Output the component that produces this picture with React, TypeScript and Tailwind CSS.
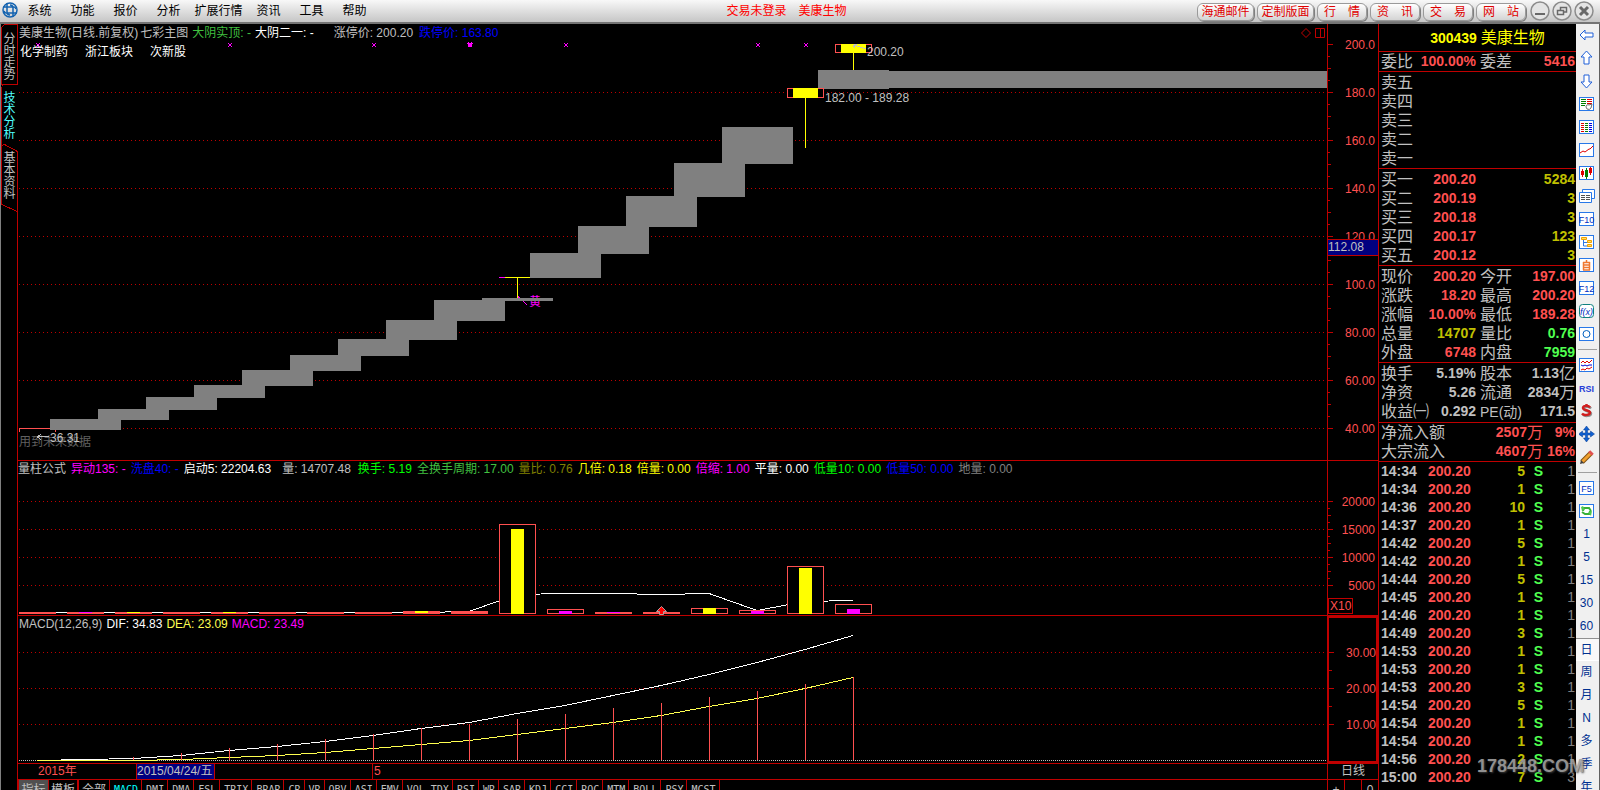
import type { ReactNode } from "react";
import clsx from "clsx";

const MENU = ["系统", "功能", "报价", "分析", "扩展行情", "资讯", "工具", "帮助"];
const WIDE_LINKS = ["海通邮件", "定制版面"];
const LINKS = ["行　情", "资　讯", "交　易", "网　站"];

const STEP = 48;
const centerOf = (index: number) => 19 + STEP * index;

// gap boxes of the main chart: [candle index, top, bottom]
const GAPS: [number, number, number][] = [
  [0, 395, 406],
  [1, 385, 396],
  [2, 373, 386],
  [3, 361, 374],
  [4, 346, 362],
  [5, 331, 347],
  [6, 315, 332],
  [7, 296, 316],
  [8, 276, 297],
  [9, 274, 277],
  [10, 229, 254],
  [11, 202, 230],
  [12, 172, 203],
  [13, 139, 173],
  [14, 103, 140],
  [16, 46, 65],
];

const MARKS = [20, 212, 356, 452, 548, 740, 788];

// volume bars: [outline top, inner top, inner colour]
const VOLUME: [number, number, string][] = [
  [151, 0, ""],
  [151, 151, "#ff00ff"],
  [151, 151, "#ffff00"],
  [151, 0, ""],
  [151, 151, "#ffff00"],
  [151, 0, ""],
  [151, 0, ""],
  [151, 0, ""],
  [150, 150, "#ffff00"],
  [150, 0, ""],
  [63, 68, "#ffff00"],
  [148, 150, "#ff00ff"],
  [151, 151, "#ff00ff"],
  [151, 0, ""],
  [147, 147, "#ffff00"],
  [149, 150, "#ff00ff"],
  [105, 107, "#ffff00"],
  [143, 148, "#ff00ff"],
];
const VOLUME_MA = [151, 151, 151, 151, 151, 151, 151, 151, 151, 150, 133, 132, 132, 133, 132, 149, 140, 139];

const DIF = [144, 143, 142, 139, 134, 130, 125, 119, 112, 106, 97, 89, 79, 69, 58, 46, 33, 19];
const DEA = [144, 144, 144, 143, 141, 139, 136, 132, 128, 124, 118, 112, 106, 99, 90, 82, 72, 61];
const MACD = [144, 144, 141, 137, 132, 128, 123, 118, 112, 108, 103, 98, 92, 87, 81, 75, 68, 61];

const toPoints = (values: number[]) => values.map((y, i) => `${centerOf(i)},${y + 0.5}`).join(" ");

const VOLUME_LEGEND = [
  { text: "量柱公式", color: "text-[#c0c0c0]" },
  { text: "异动135: -", color: "text-[#ff00ff]" },
  { text: "洗盘40: -", color: "text-[#0000ff]" },
  { text: "启动5: 22204.63", color: "text-white" },
  { text: "量: 14707.48", color: "text-[#c0c0c0] ml-1.5" },
  { text: "换手: 5.19", color: "text-[#00ff00] ml-0.5" },
  { text: "全换手周期: 17.00", color: "text-[#40c040]" },
  { text: "量比: 0.76", color: "text-[#808000]" },
  { text: "几倍: 0.18", color: "text-[#ffff00]" },
  { text: "倍量: 0.00", color: "text-[#ffff00]" },
  { text: "倍缩: 1.00", color: "text-[#ff00ff]" },
  { text: "平量: 0.00", color: "text-white" },
  { text: "低量10: 0.00", color: "text-[#00ff00]" },
  { text: "低量50: 0.00", color: "text-[#0000ff]" },
  { text: "地量: 0.00", color: "text-[#808080]" },
];

const INDICATORS = [
  "MACD", "DMI", "DMA", "FSL", "TRIX", "BRAR", "CR", "VR", "OBV", "ASI", "EMV",
  "VOL-TDX", "RSI", "WR", "SAR", "KDJ", "CCI", "ROC", "MTM", "BOLL", "PSY", "MCST",
];

const SELLS = ["卖五", "卖四", "卖三", "卖二", "卖一"];
const BUYS = [
  ["买一", "200.20", "5284"],
  ["买二", "200.19", "3"],
  ["买三", "200.18", "3"],
  ["买四", "200.17", "123"],
  ["买五", "200.12", "3"],
];

const RED = "text-[#ff5050]";
const GREEN = "text-[#50ff50]";
const OLIVE = "text-[#c0c000]";
const SILVER = "text-[#c0c0c0]";

type Field = { label: ReactNode; value: string; unit?: string; color: string };

const COMMISSION: Field[] = [
  { label: "委比", value: "100.00%", color: RED },
  { label: "委差", value: "5416", color: RED },
];

const PRICES: Field[] = [
  { label: "现价", value: "200.20", color: RED },
  { label: "今开", value: "197.00", color: RED },
  { label: "涨跌", value: "18.20", color: RED },
  { label: "最高", value: "200.20", color: RED },
  { label: "涨幅", value: "10.00%", color: RED },
  { label: "最低", value: "189.28", color: RED },
  { label: "总量", value: "14707", color: OLIVE },
  { label: "量比", value: "0.76", color: GREEN },
  { label: "外盘", value: "6748", color: RED },
  { label: "内盘", value: "7959", color: GREEN },
];

const FUNDAMENTALS: Field[] = [
  { label: "换手", value: "5.19%", color: SILVER },
  { label: "股本", value: "1.13", unit: "亿", color: SILVER },
  { label: "净资", value: "5.26", color: SILVER },
  { label: "流通", value: "2834", unit: "万", color: SILVER },
  { label: "收益㈠", value: "0.292", color: SILVER },
  { label: <span className="text-sm leading-[19px]">PE(动)</span>, value: "171.5", color: SILVER },
];

const TICKS: [string, string, string][] = [
  ["14:34", "5", "1"],
  ["14:34", "1", "1"],
  ["14:36", "10", "1"],
  ["14:37", "1", "1"],
  ["14:42", "5", "1"],
  ["14:42", "1", "1"],
  ["14:44", "5", "1"],
  ["14:45", "1", "1"],
  ["14:46", "1", "1"],
  ["14:49", "3", "1"],
  ["14:53", "1", "1"],
  ["14:53", "1", "1"],
  ["14:53", "3", "1"],
  ["14:54", "5", "1"],
  ["14:54", "1", "1"],
  ["14:54", "1", "1"],
  ["14:56", "2", "1"],
  ["15:00", "7", "3"],
];

const Header = () => (
  <header className="flex h-6 shrink-0 items-start border-b-2 border-[#747474] bg-linear-to-b from-[#f8f8f8] to-[#c6c6c6] text-xs text-black">
    <svg width="18" height="20" viewBox="0 0 18 20" fill="none" stroke="#1463b0" className="shrink-0" aria-hidden="true">
      <circle cx="10" cy="10" r="7" strokeWidth="1.5" />
      <path d="M7 3v9a3 3 0 0 0 3 3M13 17V8a3 3 0 0 0-3-3M3 7h9a3 3 0 0 1 4 2M17 13H8a3 3 0 0 1-4-2" strokeWidth="1.5" />
    </svg>
    <nav className="flex">
      {MENU.map((item) => (
        <button key={item} className={clsx("h-[22px] whitespace-nowrap", item.length > 2 ? "w-[57px]" : "w-[43px]")}>
          {item}
        </button>
      ))}
    </nav>
    <p className="mx-auto flex gap-3 whitespace-nowrap leading-[22px] text-[#ff0000]">
      <span>交易未登录</span>
      <span>美康生物</span>
    </p>
    <div className="flex gap-[3px] pt-[3px]">
      {[...WIDE_LINKS, ...LINKS].map((item) => (
        <button
          key={item}
          className={clsx(
            "h-[18px] whitespace-nowrap rounded-md border border-[#9a9a9a] bg-linear-to-b from-white to-[#d4d4d4] leading-4 text-[#e00000] shadow-[1px_1px_0_#808080]",
            item.length > 3 ? "w-[57px]" : "w-[50px]",
          )}
        >
          {item}
        </button>
      ))}
    </div>
    <div className="ml-1 flex gap-0.5 pt-px pr-1.5">
      <WindowButton label="最小化">
        <path d="M5 13h10" strokeWidth="2" />
      </WindowButton>
      <WindowButton label="还原">
        <path d="M8.5 9V6.5h6v4.5h-3M5.5 9.5h6v4h-6z" strokeWidth="1.5" />
      </WindowButton>
      <WindowButton label="关闭">
        <path d="M6 6l8 8M14 6l-8 8" strokeWidth="3" />
      </WindowButton>
    </div>
  </header>
);

const WindowButton = ({ label, children }: { label: string; children: ReactNode }) => (
  <button aria-label={label} className="size-5">
    <svg width="20" height="20" viewBox="0 0 20 20" fill="none" stroke="#686868">
      <circle cx="10" cy="10" r="9" fill="#e4e4e4" stroke="#8c8c8c" strokeWidth="1.5" />
      {children}
    </svg>
  </button>
);

const SideTabs = () => (
  <aside className="relative flex w-[18px] shrink-0 flex-col items-center border-l border-[#808080] text-xs leading-3 text-[#c0c0c0]">
    <svg className="absolute inset-0 h-full w-full" fill="none" stroke="#c00000" shapeRendering="crispEdges" aria-hidden="true">
      <path d="M16.5 0.5H3.5L0.5 3.5V60.5H16.5V0.5M0.5 62.5L2.5 60.5M0.5 62.5V121M16.5 2000V127.5L3.5 120.5L0.5 121.5V180.5L16.5 187.5" />
    </svg>
    <button className="relative h-[61px] w-3 pt-1 leading-3 break-all">分时走势</button>
    <button className="relative h-[60px] w-3 pt-0.5 leading-3 break-all text-[#50ffff]">技术分析</button>
    <button className="relative h-[66px] w-3 pb-1 leading-3 break-all">基本资料</button>
  </aside>
);

const GridLines = ({ levels }: { levels: number[] }) => (
  <g stroke="#c00000" strokeDasharray="1 3">
    {levels.map((y) => (
      <line key={y} x1="1" x2="100%" y1={y + 0.5} y2={y + 0.5} />
    ))}
  </g>
);

const PriceChart = () => (
  <svg className="absolute inset-0 h-full w-full" fill="none" shapeRendering="crispEdges" aria-label="日线">
    <GridLines levels={[68, 116, 164, 212, 260, 308, 356, 404]} />
    <g stroke="#ff00ff">
      {MARKS.map((x) => (
        <path key={x} d={`M${x - 2} 19l4 4M${x + 2} 19l-4 4`} strokeWidth={x === 452 ? 2 : 1} />
      ))}
      <path d="M499 273l2 0M500 272l9 9" />
    </g>
    <text x="511" y="282" fill="#ff00ff" fontSize="12">黄</text>
    <text x="1" y="422" fill="#606060" fontSize="12">用到未来数据</text>
    <path d="M1.5 408v-3.5h36v3.5" stroke="#ff5050" />
    <g fill="#808080">
      {GAPS.map(([index, top, bottom]) => (
        <rect key={index} x={centerOf(index) + 13} y={top} width="71" height={bottom - top} />
      ))}
      <rect x="871" y="47" width="100%" height="17" />
    </g>
    <path d="M481 253.5h6" stroke="#ff00ff" />
    <path d="M487 253.5h25M499.5 253v21M787.5 74v50M835.5 29v17" stroke="#ffff00" />
    <rect x="769.5" y="64.5" width="36" height="9" fill="#000" stroke="#ff5050" />
    <rect x="817.5" y="20.5" width="36" height="8" fill="#000" stroke="#ff5050" />
    <rect x="775" y="64" width="25" height="10" fill="#ffff00" />
    <rect x="823" y="20" width="25" height="9" fill="#ffff00" />
    <path d="M836 20.5h3M836 21l12 4M835 21l2 3M19 412.5h12M19 412.5l4-2M19 412.5l4 3" stroke="#c0c0c0" />
    <g fill="#c0c0c0" fontSize="12">
      <text x="849" y="32">200.20</text>
      <text x="807" y="78">182.00 - 189.28</text>
      <text x="32" y="418">36.31</text>
    </g>
  </svg>
);

const VolumeChart = () => (
  <svg className="absolute inset-0 h-full w-full" fill="none" shapeRendering="crispEdges" aria-label="成交量">
    <GridLines levels={[40, 68, 96, 124]} />
    <polyline points={toPoints(VOLUME_MA)} stroke="#ffffff" />
    {VOLUME.map(([top, inner, color], i) => (
      <g key={i}>
        <rect x={centerOf(i) - 18} y={top} width="37" height={153 - top} fill="#ff5050" />
        {top < 150 && <rect x={centerOf(i) - 17} y={top + 1} width="35" height={151 - top} fill="#000" />}
        {color && <rect x={centerOf(i) - 6} y={inner} width="13" height={Math.max(153 - inner - (top >= 150 ? 1 : 0), 1)} fill={color} />}
      </g>
    ))}
    <path d="M643.5 145.500l-5 5h3v3h4v-3h3z" fill="#ff0000" stroke="#b0a0a0" shapeRendering="auto" />
  </svg>
);

const MacdChart = () => (
  <svg className="absolute inset-0 h-full w-full" fill="none" shapeRendering="crispEdges" aria-label="MACD">
    <GridLines levels={[36, 72, 108]} />
    <line x1="1" x2="100%" y1="144.5" y2="144.5" stroke="#c0c0c0" strokeDasharray="1 1" />
    <polyline points={toPoints(DIF)} stroke="#ffffff" />
    <polyline points={toPoints(DEA)} stroke="#ffff50" />
    <g stroke="#ff5050">
      {MACD.map((y, i) => (
        <line key={i} x1={centerOf(i) + 0.5} x2={centerOf(i) + 0.5} y1={y} y2="144" />
      ))}
    </g>
  </svg>
);

type AxisProps = { labels: [string, number][]; minor: number; to: number; className?: string; children?: ReactNode };

const Axis = ({ labels, minor, to, className, children }: AxisProps) => {
  const first = labels[0][1];
  const ticks: number[] = [];
  for (let y = first; y < to; y += minor) ticks.push(y);
  const major = labels[1][1] - first;
  return (
    <div className={clsx("relative w-[51px] shrink-0 border-[#c00000]", className)}>
      <svg className="absolute inset-0 h-full w-full" shapeRendering="crispEdges" aria-hidden="true">
        {ticks.map((y) => {
          const offset = y - first;
          const length = offset % major === 0 ? 5 : offset % (major / 2) === 0 ? 3 : 2;
          return <line key={y} x1="0" x2={length} y1={y + 0.5} y2={y + 0.5} stroke="#c00000" />;
        })}
        <g fill="#ff5050" fontSize="12" textAnchor="end">
          {labels.map(([text, y]) => (
            <text key={text} x="47" y={y + 5}>{text}</text>
          ))}
        </g>
      </svg>
      {children}
    </div>
  );
};

const PRICE_LEVELS: [string, number][] = [
  ["200.0", 20],
  ["180.0", 68],
  ["160.0", 116],
  ["140.0", 164],
  ["120.0", 212],
  ["100.0", 260],
  ["80.00", 308],
  ["60.00", 356],
  ["40.00", 404],
];

const Charts = () => (
  <main className="flex min-w-0 flex-1 flex-col text-xs">
    <section className="flex h-[437px] shrink-0 border-b border-[#c00000]">
      <div className="relative min-w-0 flex-1 overflow-hidden">
        <PriceChart />
        <div className="relative flex h-[18px] items-center pr-0.5 pl-px whitespace-pre text-[#c0c0c0]">
          <span>美康生物(日线.前复权)</span>
          <span className="ml-0.5">七彩主图</span>
          <span className="ml-1 text-[#40c040]">大阴实顶: -</span>
          <span className="ml-1 text-white">大阴二一: -</span>
          <span className="ml-5">涨停价: 200.20</span>
          <span className="ml-1.5 text-[#0000ff]">跌停价: 163.80</span>
          <svg width="24" height="12" fill="none" stroke="#c00000" className="ml-auto" aria-hidden="true">
            <path d="M5 1.5L9.5 6L5 10.5L0.5 6zM14.5 1.5h9v9h-9zM19.5 1.5v9" />
          </svg>
        </div>
        <div className="relative flex h-5 items-center gap-[17px] pl-0.5 text-white">
          <span>化学制药</span>
          <span>浙江板块</span>
          <span>次新股</span>
        </div>
      </div>
      <Axis className="border-l" minor={12} to={416} labels={PRICE_LEVELS}>
        <span className="absolute top-[215px] left-0 h-[17px] w-full border-y border-[#c00000] bg-[#000080] leading-[15px] text-[#c0c0c0]">112.08</span>
      </Axis>
    </section>

    <section className="flex h-[155px] shrink-0 border-b border-[#c00000]">
      <div className="relative min-w-0 flex-1 overflow-hidden">
        <VolumeChart />
        <div className="relative flex h-4 items-center gap-[5px] whitespace-pre">
          {VOLUME_LEGEND.map(({ text, color }) => (
            <span key={text} className={color}>{text}</span>
          ))}
        </div>
      </div>
      <Axis className="border-l" minor={7} to={128} labels={[["20000", 40], ["15000", 68], ["10000", 96], ["5000", 124]]}>
        <span className="absolute top-[137px] left-0 h-4 w-[25px] border border-[#c00000] pl-px leading-[14px] text-[#ff5050]">X10</span>
      </Axis>
    </section>

    <section className="flex h-[148px] shrink-0 border-b border-[#c00000]">
      <div className="relative min-w-0 flex-1 overflow-hidden">
        <MacdChart />
        <div className="relative flex h-4 items-center gap-1 pl-px whitespace-pre text-[#c0c0c0]">
          <span>MACD(12,26,9)</span>
          <span className="text-white">DIF: 34.83</span>
          <span className="text-[#ffff50]">DEA: 23.09</span>
          <span className="text-[#ff00ff]">MACD: 23.49</span>
        </div>
      </div>
      <Axis className="border-2" minor={18} to={112} labels={[["30.00", 34], ["20.00", 70], ["10.00", 106]]} />
    </section>

    <div className="flex h-4 shrink-0 border-b border-[#c00000] leading-[15px] text-[#ff5050]">
      <span className="w-[118px] pl-5">2015年</span>
      <span className="w-[79px] border-x border-[#c00000] bg-[#000080] whitespace-nowrap text-[#c0c0c0]">2015/04/24/五</span>
      <span className="ml-[157px] border-l border-[#c00000] pl-px">5</span>
      <span className="ml-auto w-[51px] border-l border-[#c00000] text-center text-[#c0c0c0]">日线</span>
    </div>

    <div className="flex h-5 shrink-0 text-[#c0c0c0]">
      <button className="h-5 w-[31px] border-x border-[#c00000] bg-[#505050]">指标</button>
      <button className="h-5 w-[30px] border-r-2 border-[#c00000]">模板</button>
      <button className="h-5 w-[31px] border-r border-[#c00000]">全部</button>
      {INDICATORS.map((name) => (
        <button
          key={name}
          className={clsx(
            "h-5 border-r border-[#c00000] pr-[3px] pl-1 font-['DejaVu_Sans_Mono',monospace] text-[10px]",
            name === "MACD" && "text-[#00ffff]",
          )}
        >
          {name}
        </button>
      ))}
      <div className="ml-auto flex w-[51px]">
        {["+", "-", "0"].map((key) => (
          <button key={key} className="h-5 flex-1 border-l border-[#c00000]">{key}</button>
        ))}
      </div>
    </div>
  </main>
);

const FieldGrid = ({ fields, className }: { fields: Field[]; className?: string }) => (
  <dl className={clsx("grid grid-cols-2 gap-x-1 border-b border-[#c00000] pr-px pl-0.5", className)}>
    {fields.map(({ label, value, unit, color }, i) => (
      <div key={i} className="flex h-[19px] justify-between leading-[19px] whitespace-nowrap">
        <dt>{label}</dt>
        <dd className={clsx("flex", color)}>
          <b className="text-sm leading-[19px]">{value}</b>
          {unit}
        </dd>
      </div>
    ))}
  </dl>
);

const QuotePanel = () => (
  <section className="relative flex w-[198px] shrink-0 flex-col border-l border-[#c00000] text-base leading-[19px] text-[#c0c0c0]">
    <h1 className="flex h-7 items-center justify-center gap-1 border-b border-[#c00000] pl-5 text-[#ffff00]">
      <b className="text-sm">300439</b>
      美康生物
    </h1>
    <FieldGrid fields={COMMISSION} />
    <div className="border-b border-[#c00000] pt-px">
      <table className="w-full">
        <tbody>
          {SELLS.map((name) => (
            <tr key={name} className="h-[19px]">
              <th scope="row" className="pl-0.5 text-left font-normal">{name}</th>
              <td />
              <td />
            </tr>
          ))}
        </tbody>
      </table>
    </div>
    <div className="border-b border-[#c00000] pt-px">
      <table className="w-full">
        <tbody>
          {BUYS.map(([name, price, amount]) => (
            <tr key={name} className="h-[19px]">
              <th scope="row" className="w-[54px] pl-0.5 text-left font-normal">{name}</th>
              <td className="w-[43px] text-right text-sm leading-[19px] font-bold text-[#ff5050]">{price}</td>
              <td className="pr-px text-right text-sm leading-[19px] font-bold text-[#c0c000]">{amount}</td>
            </tr>
          ))}
        </tbody>
      </table>
    </div>
    <FieldGrid fields={PRICES} className="pt-px" />
    <FieldGrid fields={FUNDAMENTALS} className="py-px" />
    <dl className="border-b border-[#c00000] pr-px pl-0.5">
      {[["净流入额", "2507", "9%"], ["大宗流入", "4607", "16%"]].map(([label, amount, share]) => (
        <div key={label} className="flex h-[19px] whitespace-nowrap">
          <dt>{label}</dt>
          <dd className="ml-auto flex text-[#ff5050]">
            <b className="text-sm leading-[19px]">{amount}</b>万
          </dd>
          <dd className="w-8 text-right text-sm leading-[19px] font-bold text-[#ff5050]">{share}</dd>
        </div>
      ))}
    </dl>
    <table className="w-full table-fixed text-sm font-bold">
      <tbody>
        {TICKS.map(([time, volume, count], i) => (
          <tr key={i} className="h-[18px] leading-[18px]">
            <td className="w-[49px] pl-0.5">{time}</td>
            <td className="w-[43px] text-[#ff5050]">200.20</td>
            <td className="w-[54px] text-right text-[#c0c000]">{volume}</td>
            <td className="w-[18px] text-right text-[#50ff50]">S</td>
            <td className="pr-px text-right font-normal text-[#808080]">{count}</td>
          </tr>
        ))}
      </tbody>
    </table>
    <span className="absolute -right-2 bottom-3 text-lg leading-6 font-bold text-[#a0a0a0] opacity-90 [text-shadow:1px_1px_2px_#404040]">
      178448.COM
    </span>
  </section>
);

const Frame = ({ children }: { children?: ReactNode }) => (
  <>
    <rect x="0.5" y="1.5" width="14" height="13" fill="#fff" stroke="#2878e8" />
    {children}
  </>
);

const frameText = (text: string) => (
  <Frame>
    <text x="7.5" y="12" fontSize="9" fill="#0030c0" textAnchor="middle">{text}</text>
  </Frame>
);

const TOOLS: { name: string; icon: ReactNode; divider?: boolean }[] = [
  { name: "后退", icon: <path d="M1 8l5-5v3h8v4H6v3z" fill="#fff" stroke="#2060d8" /> },
  { name: "上移", icon: <path d="M7.5 1L13 7H10v7H5V7H2z" fill="#fff" stroke="#2060d8" /> },
  { name: "下移", icon: <path d="M7.5 15L13 9H10V2H5v7H2z" fill="#fff" stroke="#2060d8" /> },
  {
    name: "自选",
    icon: (
      <Frame>
        <path d="M2 3.5h5M2 5.5h5M2 7.5h5M2 9.500h4" stroke="#008000" />
        <path d="M8 3.5h5M8 5.5h5M8 7.5h5" stroke="#e00000" />
        <path d="M7 11a2 2 0 0 1 3-2l3-1-1 4a3 3 0 0 1-4 1z" stroke="#707070" />
      </Frame>
    ),
  },
  {
    name: "报价",
    icon: (
      <Frame>
        <path d="M2 4.5h3M2 6.5h3M2 8.5h3M2 10.5h3M2 12.5h3" stroke="#e00000" />
        <path d="M6 4.5h3M6 6.5h3M6 8.5h3M6 10.5h3M6 12.5h3" stroke="#008000" />
        <path d="M10 4.5h3M10 6.5h3M10 8.5h3M10 10.5h3M10 12.5h3" stroke="#0000e0" />
      </Frame>
    ),
  },
  { name: "分时", icon: <Frame><path d="M1 11l3-2 2 1 4-3 1 0 3-3" stroke="#e00000" /></Frame> },
  {
    name: "K线",
    icon: (
      <Frame>
        <path d="M3.5 4v8M11.5 2v8" stroke="#e00000" />
        <path d="M2 6h3v4H2zM10 3h3v5h-3z" fill="#e00000" />
        <path d="M7.5 3v11" stroke="#008000" />
        <path d="M6 5h3v7H6z" fill="#008000" />
      </Frame>
    ),
  },
  {
    name: "多窗口",
    icon: (
      <g fill="#fff" stroke="#2878e8">
        <path d="M3.5 1.5h12v9h-12z" />
        <path d="M0.5 4.5h12v10h-12z" />
        <path d="M2 7.5h4M7 7.5h4M2 9.5h4M7 9.5h4M2 11.5h4M7 11.5h4" stroke="#505050" />
      </g>
    ),
  },
  { name: "F10", icon: frameText("F10") },
  {
    name: "板块",
    icon: (
      <Frame>
        <path d="M4.5 5v7h5M4.5 8.5h5" stroke="#2878e8" />
        <path d="M2.5 3.5h5v2h-5zM8.5 6.5h4v2h-4zM8.5 10.5h4v2h-4z" fill="#ffe060" stroke="#f0a000" />
      </Frame>
    ),
  },
  {
    name: "自定义",
    icon: <Frame><path d="M4.5 5v8M10.5 5v8M4 5.5h7M4 8h7M4 10.5h7M4 13h7M7.5 3v2" stroke="#f07830" strokeWidth="1.5" /></Frame>,
  },
  { name: "F12", icon: frameText("F12") },
  {
    name: "公式",
    icon: (
      <>
        <rect x="0.5" y="1.5" width="14" height="13" rx="3" fill="#fff" stroke="#108080" />
        <text x="7.5" y="12" fontSize="9" fontStyle="italic" fill="#0030c0" textAnchor="middle">f(x)</text>
      </>
    ),
  },
  { name: "圆", icon: <Frame><circle cx="7.5" cy="8" r="3.5" stroke="#0060c0" /></Frame> },
  {
    name: "叠加",
    divider: true,
    icon: (
      <Frame>
        <path d="M2 6l2-2 2 2 2-2 2 2 3-3M2 13l2-1 2 1 2-2 2 1 3-2" stroke="#e00000" />
        <path d="M2 8l2 1 2-1 2 1 2-1 3 0" stroke="#0000d0" />
      </Frame>
    ),
  },
  { name: "RSI", icon: <text x="7.5" y="12" fontSize="9" fontWeight="bold" fill="#2840d8" textAnchor="middle">RSI</text> },
  {
    name: "交易",
    icon: (
      <g strokeWidth="2.5">
        <path d="M12 5.5C10 3 5 3.5 5 6s7 2 7 4.5S6 14 4 11.5" stroke="#909090" />
        <path d="M11 4.5C9 2 4 2.5 4 5s7 2 7 4.5S5 13 3 10.5M7.5 1v2" stroke="#d02020" />
      </g>
    ),
  },
  {
    name: "移动",
    icon: (
      <path d="M7.5 0l3 4h-2v3h3V5l4 3-4 3V9h-3v3h2l-3 4-3-4h2V9h-3v2l-4-3 4-3v2h3V4h-2z" fill="#1060d0" stroke="#003890" strokeWidth="0.5" />
    ),
  },
  {
    name: "画线",
    icon: (
      <>
        <path d="M3 13L12 4" stroke="#805010" strokeWidth="5" />
        <path d="M3 13L12 4" stroke="#f0a030" strokeWidth="3" />
        <path d="M11 5l2-2" stroke="#e05050" strokeWidth="5" />
        <path d="M1 15l1-4 3 3z" fill="#404040" />
      </>
    ),
  },
  { name: "F5", divider: true, icon: frameText("F5") },
  {
    name: "刷新",
    icon: (
      <Frame>
        <path d="M4 8V5h6l2 3M11 8v3H6L3 9" stroke="#38b038" strokeWidth="2" />
        <path d="M2 4l2-1 2 4-3 1zM9 9l4-1-1 5z" fill="#50c850" />
      </Frame>
    ),
  },
];

const PERIODS = ["1", "5", "15", "30", "60", "日", "周", "月", "N", "多", "季", "年"];

const Toolbar = () => (
  <aside className="flex w-6 shrink-0 flex-col border-r border-[#606060] bg-[#f0f0f0]">
    {TOOLS.map(({ name, icon, divider }) => (
      <div key={name}>
        {divider && <div className="mx-0.5 mt-[3px] mb-1 h-px bg-[#a0a0a0]" />}
        <button aria-label={name} title={name} className="flex h-[23px] w-full items-start pt-[3px] pl-[3px]">
          <svg width="16" height="16" viewBox="0 0 16 16" fill="none">{icon}</svg>
        </button>
      </div>
    ))}
    {PERIODS.map((period) => (
      <button
        key={period}
        className={clsx(
          "h-[23px] w-full shrink-0 pr-0.5 text-xs leading-[23px] text-[#003090]",
          period === "日" && "border-y border-t-[#909090] border-b-white bg-[#f8f8f8] leading-[21px]",
        )}
      >
        {period}
      </button>
    ))}
  </aside>
);

export default function App() {
  return (
    <div className="flex h-screen flex-col overflow-hidden bg-black font-['Liberation_Sans','Noto_Sans_CJK_SC',sans-serif]">
      <Header />
      <div className="flex min-h-0 flex-1">
        <SideTabs />
        <Charts />
        <QuotePanel />
        <Toolbar />
      </div>
    </div>
  );
}
